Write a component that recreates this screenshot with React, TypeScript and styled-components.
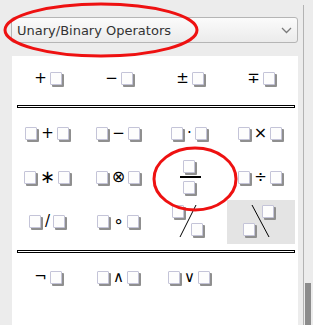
import styled, { createGlobalStyle } from "styled-components";

const GlobalStyle = createGlobalStyle`
  html, body {
    margin: 0;
    padding: 0;
    background: #ececec;
  }
  body {
    font-family: "DejaVu Sans", "Liberation Sans", sans-serif;
  }
`;

const Window = styled.div`
  position: relative;
  width: 313px;
  height: 325px;
  overflow: hidden;
  display: flex;
  background: #ececec;
`;

const Main = styled.div`
  width: 303px;
  box-sizing: border-box;
  display: flex;
  flex-direction: column;
  padding: 17px 5px 0 11px;
`;

const Combo = styled.div`
  height: 26px;
  box-sizing: border-box;
  display: flex;
  align-items: center;
  justify-content: space-between;
  padding: 0 5px 0 5px;
  border: 1px solid #b5b5b5;
  border-radius: 3px;
  background: linear-gradient(#fbfbfb, #ebebeb);
  color: #333;
  font-size: 13px;
`;

const Panel = styled.div`
  flex: 1;
  margin: 13px 0 0 1px;
  background: #fff;
  padding-top: 1px;
`;

const Grid = styled.div`
  display: grid;
  grid-template-columns: repeat(4, 71px);
  grid-auto-rows: 44px;
`;

const Cell = styled.div<{ $active?: boolean }>`
  display: flex;
  align-items: center;
  justify-content: center;
  margin: 0 1px 0 2px;
  background: ${(p) => (p.$active ? "#e4e4e4" : "transparent")};
`;

const Separator = styled.div<{ $top: number; $bottom: number }>`
  height: 3px;
  box-sizing: border-box;
  margin: ${(p) => p.$top}px 3px ${(p) => p.$bottom}px 5px;
  border: 1px solid #000;
  background: #fff;
`;

const Item = styled.span`
  display: inline-flex;
  align-items: center;
`;

const Slot = styled.span<{ $col?: number; $row?: number }>`
  display: inline-block;
  width: 10px;
  height: 11px;
  border: 1px solid #c4c4d8;
  border-radius: 1px;
  background: #fdfdfd;
  box-shadow: 2px 2px 0 #8f8f8f;
  margin: 0 2px 2px 0;
  grid-column: ${(p) => p.$col ?? "auto"};
  grid-row: ${(p) => p.$row ?? "auto"};
`;

const Op = styled.span<{ $size?: number }>`
  font-size: ${(p) => p.$size ?? 15}px;
  line-height: 1;
  color: #000;
  padding: 0 3px 2px 2px;
`;

const Fraction = styled.span`
  display: inline-flex;
  flex-direction: column;
  align-items: center;
  gap: 1px;
`;

const Bar = styled.span`
  width: 21px;
  height: 2px;
  background: #000;
  margin-bottom: 2px;
`;

const Slanted = styled.span`
  position: relative;
  display: grid;
  grid-template-columns: 19px 19px;
  grid-template-rows: 18px 17px;
  align-items: start;
  justify-items: start;
  padding: 1px 0 0 1px;
`;

const SlantLine = styled.svg`
  position: absolute;
  left: 0;
  top: 0;
  pointer-events: none;
`;

const Scrollbar = styled.div`
  width: 10px;
  box-sizing: border-box;
  margin-top: 5px;
  border-left: 1px solid #b3b3b3;
  display: flex;
  flex-direction: column;
  justify-content: flex-end;
`;

const Thumb = styled.div`
  height: 42px;
  width: 6px;
  margin-left: 1px;
  background: #8c8c8c;
`;

const Marks = styled.svg`
  position: absolute;
  left: 0;
  top: 0;
  pointer-events: none;
`;

// glyphs that DejaVu draws small get a bigger size
const bigOps: Record<string, number> = { "∗": 18, "⊗": 16, "∘": 17, "×": 16 };

function Unary({ op }: { op: string }) {
  return (
    <Item>
      <Op $size={bigOps[op]}>{op}</Op>
      <Slot />
    </Item>
  );
}

function Binary({ op }: { op: string }) {
  return (
    <Item>
      <Slot />
      <Op $size={bigOps[op]}>{op}</Op>
      <Slot />
    </Item>
  );
}

function Slash({ back }: { back?: boolean }) {
  return (
    <Slanted>
      {back ? (
        <>
          <Slot $col={2} $row={1} />
          <Slot $col={1} $row={2} />
        </>
      ) : (
        <>
          <Slot $col={1} $row={1} />
          <Slot $col={2} $row={2} />
        </>
      )}
      <SlantLine width="38" height="36">
        {back ? (
          <line x1="10" y1="1" x2="27" y2="33" stroke="#000" strokeWidth="1" />
        ) : (
          <line x1="25" y1="1" x2="9" y2="33" stroke="#000" strokeWidth="1" />
        )}
      </SlantLine>
    </Slanted>
  );
}

export default function App() {
  const binaries = ["+", "−", "·", "×", "∗", "⊗"];

  return (
    <Window>
      <GlobalStyle />
      <Main>
        <Combo>
          <span>Unary/Binary Operators</span>
          <svg width="11" height="7" viewBox="0 0 11 7">
            <polyline points="1,1 5.5,5.5 10,1" fill="none" stroke="#7a7a7a" strokeWidth="1.3" />
          </svg>
        </Combo>

        <Panel>
          {/* unary */}
          <Grid>
            {["+", "−", "±", "∓"].map((op) => (
              <Cell key={op}>
                <Unary op={op} />
              </Cell>
            ))}
          </Grid>

          <Separator $top={4} $bottom={4} />

          {/* binary */}
          <Grid>
            {binaries.map((op) => (
              <Cell key={op}>
                <Binary op={op} />
              </Cell>
            ))}
            <Cell>
              <Fraction>
                <Slot />
                <Bar />
                <Slot />
              </Fraction>
            </Cell>
            <Cell>
              <Binary op="÷" />
            </Cell>
            <Cell>
              <Binary op="/" />
            </Cell>
            <Cell>
              <Binary op="∘" />
            </Cell>
            <Cell>
              <Slash />
            </Cell>
            <Cell $active>
              <Slash back />
            </Cell>
          </Grid>

          <Separator $top={6} $bottom={3} />

          {/* logic */}
          <Grid>
            <Cell>
              <Unary op="¬" />
            </Cell>
            <Cell>
              <Binary op="∧" />
            </Cell>
            <Cell>
              <Binary op="∨" />
            </Cell>
          </Grid>
        </Panel>
      </Main>

      <Scrollbar>
        <Thumb />
      </Scrollbar>

      <Marks width="313" height="325">
        <ellipse cx="101" cy="30" rx="96" ry="26" fill="none" stroke="#ee1111" strokeWidth="3" />
        <ellipse cx="195" cy="179" rx="41" ry="31" fill="none" stroke="#ee1111" strokeWidth="3" />
      </Marks>
    </Window>
  );
}
